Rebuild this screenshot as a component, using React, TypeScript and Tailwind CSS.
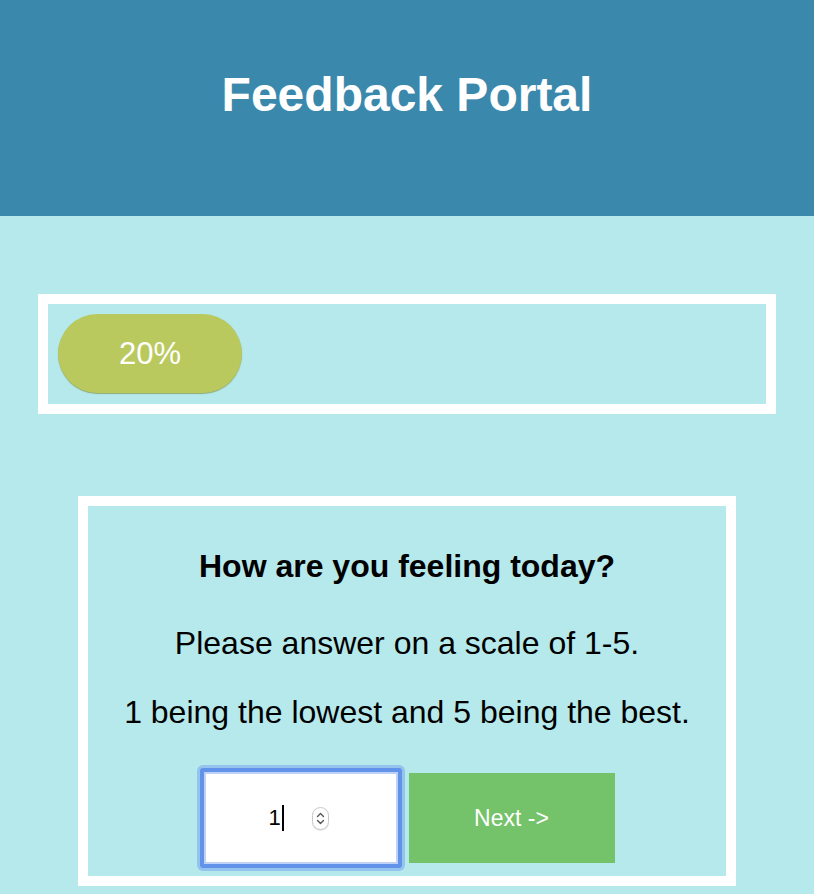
import React from "react";

export default function App() {
  return (
    <div
      className="min-h-[894px] w-full bg-[#b5e9ec] text-black"
      style={{ fontFamily: '"Liberation Sans", Arial, Helvetica, sans-serif' }}
    >
      <header className="flex h-[216px] items-center justify-center bg-[#3b88ad] pb-[26px]">
        <h1 className="text-[48px] font-bold leading-[56px] text-white">Feedback Portal</h1>
      </header>

      <div className="mx-[38px] mt-[78px] box-content h-[100px] border-[10px] border-white">
        <div className="ml-[10px] mt-[10px] flex h-[79px] w-[184px] items-center justify-center rounded-full bg-[#b9c95e] shadow-[0_1px_1px_rgba(120,130,40,0.6)]">
          <span className="text-[31px] leading-none text-white">20%</span>
        </div>
      </div>

      <div className="mx-[78px] mt-[82px] border-[10px] border-white px-4 pb-[8px] pt-[40px] text-center">
        <h2 className="text-[32px] font-bold leading-[40px]">How are you feeling today?</h2>
        <p className="mt-[37px] text-[32px] leading-[40px]">Please answer on a scale of 1-5.</p>
        <p className="mt-[29px] text-[32px] leading-[40px]">1 being the lowest and 5 being the best.</p>
        <div className="mt-[36px] flex items-center justify-center gap-[7px]">
          <div className="flex h-[100px] w-[202px] items-center justify-center rounded-[3px] border-4 border-[#6193ea] bg-white shadow-[0_0_0_3px_rgba(120,165,240,0.55),inset_0_0_0_2px_#bfd2f6]">
            <div className="mr-[4px] flex items-center">
              <span className="text-[22px] leading-none">1</span>
              <span className="ml-[1px] h-[26px] w-[2px] bg-black" />
              <div className="ml-[28px] flex h-[23px] w-[17px] flex-col items-center justify-center rounded-full border border-[#c9c9c9] bg-white shadow-[0_1px_1px_rgba(0,0,0,0.1)]">
                <svg width="9" height="17" viewBox="0 0 9 17" fill="none" stroke="#555" strokeWidth="1.4" strokeLinecap="round" strokeLinejoin="round">
                  <path d="M1.5 6.5 L4.5 3.5 L7.5 6.5" />
                  <path d="M1.5 10.5 L4.5 13.5 L7.5 10.5" />
                </svg>
              </div>
            </div>
          </div>
          <button className="flex h-[90px] w-[206px] items-center justify-center bg-[#74c26a] text-[23px] text-white">
            Next -&gt;
          </button>
        </div>
      </div>
    </div>
  );
}
